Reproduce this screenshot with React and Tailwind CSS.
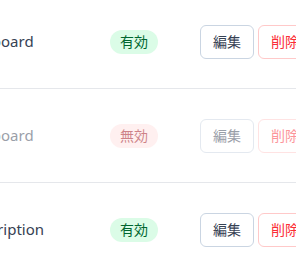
import React from "react";

const rows = [
  { id: 1, name: "Dashboard", active: true },
  { id: 2, name: "Dashboard", active: false },
  { id: 3, name: "Subscription", active: true },
];

const RowItem = ({ row }) => {
  return (
    <div className="flex h-[94px] items-center border-b border-gray-200">
      <div
        className={`-ml-[44px] flex items-center ${
          row.active ? "" : "opacity-50"
        }`}
      >
        <div className="w-[154px] text-[15px] text-gray-700">{row.name}</div>
        <div className="w-[90px]">
          {row.active ? (
            <span className="inline-block rounded-full bg-green-100 px-2.5 py-0.5 text-sm text-green-800">
              有効
            </span>
          ) : (
            <span className="inline-block rounded-full bg-red-100 px-2.5 py-0.5 text-sm text-red-800">
              無効
            </span>
          )}
        </div>
        <div className="flex gap-1 whitespace-nowrap">
          <button className="rounded-md border border-slate-300 px-3 py-1.5 text-sm text-gray-700">
            編集
          </button>
          <button className="rounded-md border border-red-200 px-3 py-1.5 text-sm text-red-500">
            削除
          </button>
        </div>
      </div>
    </div>
  );
};

export default function App() {
  return (
    <div
      className="h-[273px] w-[296px] overflow-hidden bg-white"
      style={{ fontFamily: '"Noto Sans", "Noto Sans CJK JP", sans-serif' }}
    >
      <div className="-mt-[5px]">
        {rows.map((row) => (
          <RowItem key={row.id} row={row} />
        ))}
      </div>
    </div>
  );
}
